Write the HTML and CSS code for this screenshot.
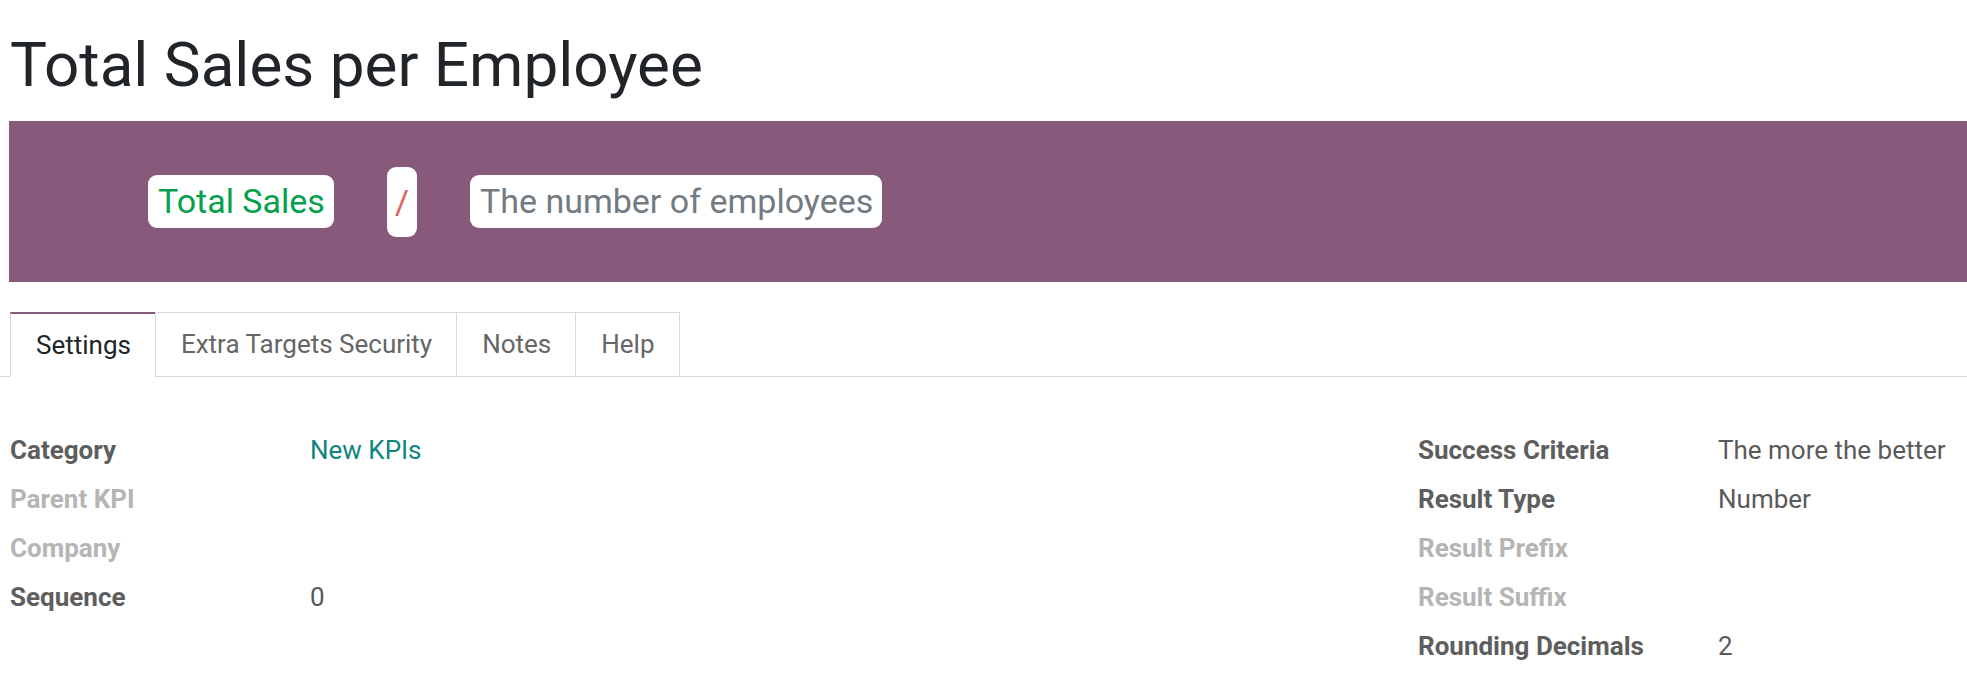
FILE: index.html
```html
<!DOCTYPE html>
<html lang="en">
<head>
    <meta charset="UTF-8">
    <meta name="viewport" content="width=device-width, initial-scale=1.0">
    <title>Total Sales per Employee</title>
    <link rel="stylesheet" href="styles.css">
</head>
<body>

<div class="kpi-sheet">
    <h1 class="kpi-title">Total Sales per Employee</h1>

    <div class="formula-band">
        <span class="formula-pill numerator">Total Sales</span>
        <span class="formula-pill operator">/</span>
        <span class="formula-pill denominator">The number of employees</span>
    </div>

    <ul class="form-tabs">
        <li class="active">Settings</li>
        <li>Extra Targets Security</li>
        <li>Notes</li>
        <li>Help</li>
    </ul>

    <div class="field-groups">
        <div class="field-group">
            <div class="field-label">Category</div>
            <div class="field-value link">New KPIs</div>

            <div class="field-label muted">Parent KPI</div>
            <div class="field-value"></div>

            <div class="field-label muted">Company</div>
            <div class="field-value"></div>

            <div class="field-label">Sequence</div>
            <div class="field-value">0</div>
        </div>

        <div class="field-group">
            <div class="field-label">Success Criteria</div>
            <div class="field-value">The more the better</div>

            <div class="field-label">Result Type</div>
            <div class="field-value">Number</div>

            <div class="field-label muted">Result Prefix</div>
            <div class="field-value"></div>

            <div class="field-label muted">Result Suffix</div>
            <div class="field-value"></div>

            <div class="field-label">Rounding Decimals</div>
            <div class="field-value">2</div>
        </div>
    </div>
</div>

</body>
</html>
```

FILE: styles.css
```css
body {
    font-family: Roboto, "Liberation Sans", sans-serif;
    background: #fff;
    color: #212529;
    margin: 0;
    padding: 0;
    overflow: hidden;
}

.kpi-sheet {
    width: 100%;
}

.kpi-title {
    margin: 28px 0 19px 10px;
    font-size: 62px;
    font-weight: 400;
    line-height: 74px;
    color: #212529;
}

/* Formula band */
.formula-band {
    margin-left: 9px;
    height: 161px;
    background-color: #875a7b;
    display: flex;
    align-items: center;
    gap: 53px;
    padding-left: 139px;
}

.formula-pill {
    background-color: #fff;
    border-radius: 9px;
    font-size: 34px;
    height: 53px;
    line-height: 53px;
    padding: 0 9px 0 10px;
    white-space: nowrap;
}

.formula-pill.numerator {
    color: #04a04c;
}

.formula-pill.operator {
    color: #e0605c;
    height: 70px;
    line-height: 70px;
    padding: 0 8px;
}

.formula-pill.denominator {
    color: #737b82;
}

/* Tabs */
.form-tabs {
    list-style: none;
    margin: 30px 0 0 0;
    padding: 0 0 0 10px;
    display: flex;
    border-bottom: 1px solid #d6d9dc;
}

.form-tabs li {
    font-size: 26px;
    line-height: 63px;
    padding: 0 24px 0 25px;
    color: #666;
    border: 1px solid #d6d9dc;
    border-bottom: none;
    margin-right: -1px;
    margin-bottom: -1px;
    background-color: #fff;
}

.form-tabs li.active {
    color: #212529;
    border-top: 2px solid #875a7b;
    line-height: 62px;
    border-bottom: 1px solid #fff;
}

.form-tabs li:not(.active) {
    border-bottom: 1px solid #d6d9dc;
}

/* Fields */
.field-groups {
    display: grid;
    grid-template-columns: 1408px 1fr;
    padding-left: 10px;
    margin-top: 48px;
}

.field-group {
    display: grid;
    grid-template-columns: 300px 1fr;
    grid-auto-rows: 49px;
    align-items: center;
    font-size: 26px;
}

.field-label {
    font-weight: 700;
    color: #5e5e5e;
    white-space: nowrap;
}

.field-label.muted {
    color: #b5b5b5;
}

.field-value {
    color: #5a5a5a;
    white-space: nowrap;
}

.field-value.link {
    color: #0f8580;
}
```
